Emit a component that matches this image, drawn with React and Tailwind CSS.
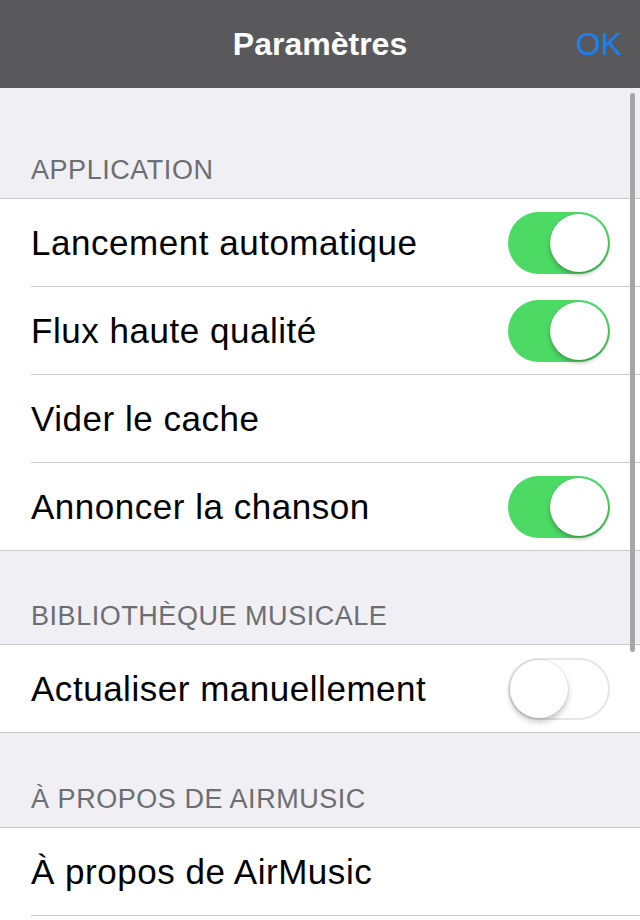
import React from "react";

const font = { fontFamily: '"Liberation Sans", Arial, sans-serif' };

function Toggle({ on }) {
  if (on) {
    return (
      <div className="relative w-[102px] h-[62px] rounded-full bg-[#4cd964] shrink-0">
        <div className="absolute right-[2px] top-[2px] w-[58px] h-[58px] rounded-full bg-white shadow-[0_3px_4px_rgba(0,0,0,0.25),0_0_0_0.5px_rgba(0,0,0,0.08)]" />
      </div>
    );
  }
  return (
    <div className="relative w-[102px] h-[62px] rounded-full bg-white border-2 border-[#e5e5ea] shrink-0">
      <div className="absolute left-[0px] top-[0px] w-[58px] h-[58px] rounded-full bg-white shadow-[0_4px_6px_rgba(0,0,0,0.22),0_0_0_1px_rgba(0,0,0,0.06)]" />
    </div>
  );
}

function Row({ label, toggle, last }) {
  return (
    <div className="bg-white">
      <div className="h-[87px] flex items-center justify-between pl-[31px] pr-[30px]">
        <span className="text-[35px] tracking-[0.015em] text-black leading-none">{label}</span>
        {toggle !== undefined && <Toggle on={toggle} />}
      </div>
      {last ? (
        <div className="h-px bg-[#c8c7cc]" />
      ) : (
        <div className="pl-[31px] bg-white">
          <div className="h-px bg-[#c8c7cc]" />
        </div>
      )}
    </div>
  );
}

function SectionHeader({ title, height }) {
  return (
    <div className={`flex items-end pl-[31px] pb-[12px] border-b border-[#c8c7cc] ${height}`}>
      <span className="text-[27px] tracking-[0.02em] leading-[32px] text-[#6d6d72]">{title}</span>
    </div>
  );
}

export default function App() {
  return (
    <div className="relative w-[640px] h-[920px] overflow-hidden bg-[#efeff4]" style={font}>
      <div className="h-[88px] bg-[#59595c] flex items-center justify-center relative">
        <span className="text-white text-[32px] font-bold leading-none">Paramètres</span>
        <span className="absolute right-[18px] top-1/2 -translate-y-1/2 text-[#1a7ff5] text-[32px] leading-none">OK</span>
      </div>

      <SectionHeader title="APPLICATION" height="h-[111px]" />
      <Row label="Lancement automatique" toggle={true} />
      <Row label="Flux haute qualité" toggle={true} />
      <Row label="Vider le cache" />
      <Row label="Annoncer la chanson" toggle={true} last />

      <SectionHeader title="BIBLIOTHÈQUE MUSICALE" height="h-[94px]" />
      <Row label="Actualiser manuellement" toggle={false} last />

      <SectionHeader title="À PROPOS DE AIRMUSIC" height="h-[95px]" />
      <Row label="À propos de AirMusic" />
      <div className="h-[87px] bg-white" />

      <div className="absolute right-[5px] top-[93px] w-[5px] h-[559px] rounded-full bg-[#a6a6a6]" />
    </div>
  );
}
